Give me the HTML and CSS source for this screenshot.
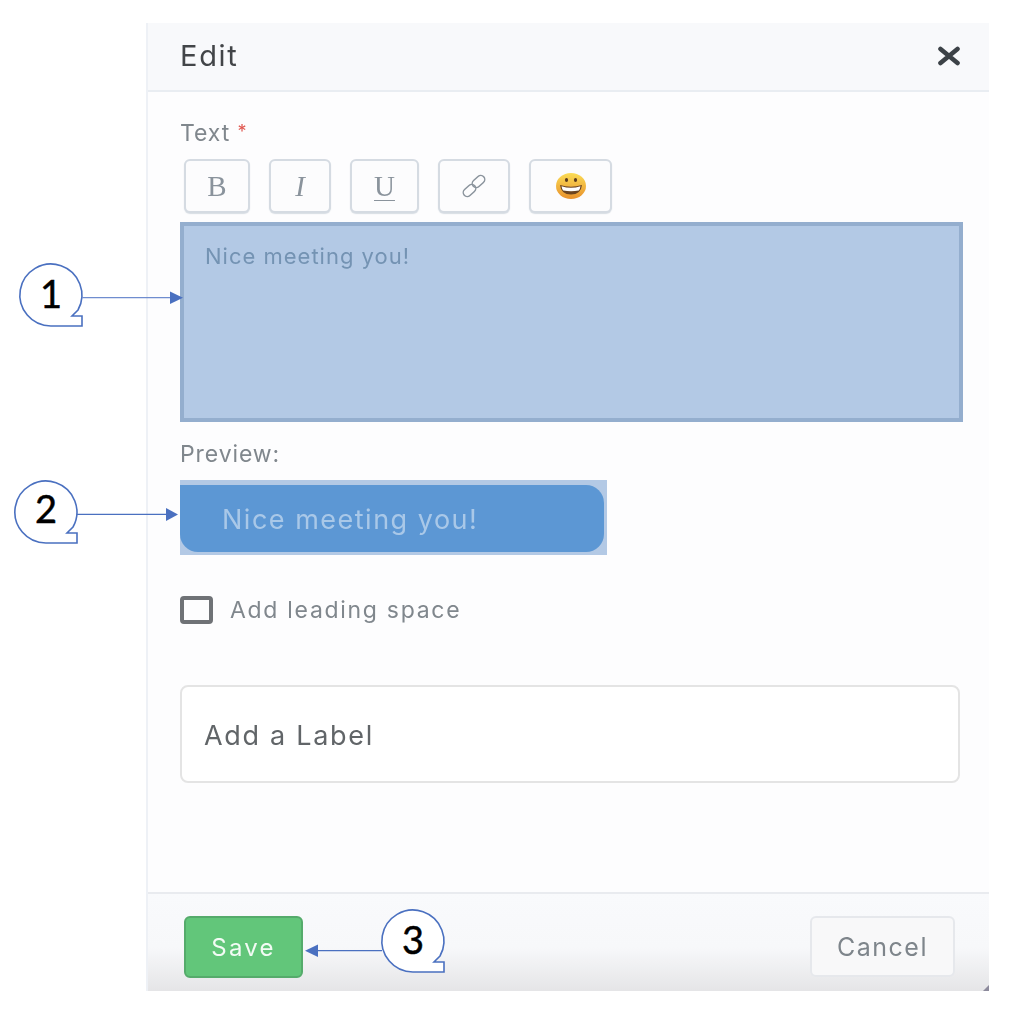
FILE: index.html
```html
<!DOCTYPE html>
<html lang="en">

<head>
    <meta charset="UTF-8">
    <meta name="viewport" content="width=device-width, initial-scale=1.0">
    <title>Edit</title>
    <link rel="stylesheet" href="styles.css">
</head>

<body>

    <div class="panel">
        <!-- Header -->
        <div class="panel-header">
            <h1>Edit</h1>
            <svg class="close-icon" width="24" height="20" viewBox="0 0 24 20">
                <path d="M3.5 3 L20.5 17 M20.5 3 L3.5 17" fill="none" stroke="#3c4247" stroke-width="4.6" stroke-linecap="round"/>
            </svg>
        </div>

        <!-- Main Content -->
        <div class="panel-body">
            <div class="field-label">Text <span class="required">*</span></div>

            <div class="toolbar">
                <button class="tool tool-b">B</button>
                <button class="tool tool-i">I</button>
                <button class="tool tool-u">U</button>
                <button class="tool tool-link">
                    <svg width="28" height="26" viewBox="0 0 28 26">
                        <g fill="none" stroke="#8a939c" stroke-width="1.5">
                            <rect x="2.5" y="13.5" width="14" height="8" rx="4" transform="rotate(-42 9.5 17.5)"/>
                            <rect x="11.5" y="4.5" width="14" height="8" rx="4" transform="rotate(-42 18.5 8.5)"/>
                        </g>
                    </svg>
                </button>
                <button class="tool tool-emoji">
                    <svg width="30" height="28" viewBox="0 0 30 28">
                        <defs>
                            <linearGradient id="face" x1="0" y1="0" x2="0" y2="1">
                                <stop offset="0" stop-color="#fbdc55"/>
                                <stop offset="1" stop-color="#e8912c"/>
                            </linearGradient>
                        </defs>
                        <ellipse cx="15" cy="14" rx="15" ry="13" fill="url(#face)"/>
                        <ellipse cx="10.5" cy="8" rx="1.6" ry="2.1" fill="#5a3a1c"/>
                        <ellipse cx="19.5" cy="8" rx="1.6" ry="2.1" fill="#5a3a1c"/>
                        <path d="M4 13 Q15 16.5 26 13 Q25 22.5 15 22.5 Q5 22.5 4 13 Z" fill="#6b4420"/>
                        <path d="M5.5 14.2 Q15 17.5 24.5 14.2 Q24 17 22.8 18.6 Q15 20 7.2 18.6 Q6 17 5.5 14.2 Z" fill="#fff"/>
                    </svg>
                </button>
            </div>

            <div class="text-box">Nice meeting you!</div>

            <div class="field-label preview-label">Preview:</div>
            <div class="preview-wrap">
                <div class="preview-bubble">Nice meeting you!</div>
            </div>

            <div class="check-row">
                <span class="check-box"></span>
                <span class="check-text">Add leading space</span>
            </div>

            <div class="label-input">Add a Label</div>
        </div>

        <!-- Footer -->
        <div class="panel-footer">
            <button class="btn-save">Save</button>
            <button class="btn-cancel">Cancel</button>
            <span class="resize-grip"></span>
        </div>
    </div>

    <!-- Callouts drawn over the screenshot -->
    <svg class="callouts" width="1024" height="1022" viewBox="0 0 1024 1022">
        <defs>
            <path id="bubble" d="M51 326 A31 31 0 1 1 78 310 L72 316 L82 316 L82 326 Z" fill="#fff" stroke="#4a70c0" stroke-width="1.6"/>
        </defs>

        <use href="#bubble"/>
        <text class="callout-num" x="51" y="308">1</text>
        <path d="M82 297.7 H171" stroke="#6f8dcf" stroke-width="1.3"/>
        <path d="M170 291.5 L183 297.7 L170 304 Z" fill="#4a70c0"/>

        <use href="#bubble" x="-5" y="217"/>
        <text class="callout-num" x="46" y="523">2</text>
        <path d="M77 514.4 H167" stroke="#4a70c0" stroke-width="1.3"/>
        <path d="M166 508 L178 514.4 L166 521 Z" fill="#4a70c0"/>

        <use href="#bubble" x="362" y="646"/>
        <text class="callout-num" x="413" y="954">3</text>
        <path d="M382 950.7 H317" stroke="#4a70c0" stroke-width="1.3"/>
        <path d="M318 944.5 L305 950.7 L318 957 Z" fill="#4a70c0"/>
    </svg>

</body>

</html>
```

FILE: styles.css
```css
body {
    font-family: Inter, "Liberation Sans", Arial, sans-serif;
    background-color: #fff;
    color: #333;
    margin: 0;
    padding: 23px 0 0 146px;
    height: 999px;
    overflow: hidden;
}

/* Panel */
.panel {
    width: 843px;
    height: 968px;
    box-sizing: border-box;
    border-left: 2px solid #eef1f6;
    display: flex;
    flex-direction: column;
    background-color: #fdfdfe;
    filter: blur(0.4px);
}

.panel-header {
    height: 69px;
    box-sizing: border-box;
    flex: none;
    display: flex;
    align-items: center;
    justify-content: space-between;
    padding: 0 28px 2px 32px;
    background-color: #f8f9fb;
    border-bottom: 2px solid #e9edf2;
}

.panel-header h1 {
    margin: 0;
    font-size: 29px;
    font-weight: normal;
    letter-spacing: 1.7px;
    color: #424548;
}

.close-icon {
    display: block;
}

/* Form */
.panel-body {
    flex: 1;
    padding: 0 0 0 32px;
}

.field-label {
    font-size: 23px;
    letter-spacing: 0.9px;
    line-height: 26px;
    color: #80878d;
    margin-top: 27px;
}

.required {
    color: #e0574f;
    font-size: 18px;
    vertical-align: 3px;
}

.toolbar {
    display: flex;
    gap: 19px;
    margin: 13px 0 9px 4px;
}

.tool {
    height: 54px;
    box-sizing: border-box;
    padding: 0;
    display: flex;
    align-items: center;
    justify-content: center;
    background-color: #fcfcfd;
    border: 2px solid #d5dbe2;
    border-radius: 6px;
    box-shadow: 0 1px 1px rgba(150, 165, 180, 0.35);
    color: #8a939c;
    font-family: "Liberation Serif", serif;
    font-size: 29px;
}

.tool-b { width: 66px; }
.tool-i { width: 62px; font-style: italic; }
.tool-u { width: 69px; text-decoration: underline; text-decoration-thickness: 1px; text-underline-offset: 4px; }
.tool-link { width: 72px; }
.tool-emoji { width: 83px; }

.text-box {
    width: 783px;
    height: 200px;
    box-sizing: border-box;
    padding: 17px 21px;
    background-color: #b3c9e5;
    border: 4px solid #94aece;
    font-size: 22px;
    letter-spacing: 1px;
    line-height: 26px;
    color: #7493b3;
}

.preview-label {
    margin-top: 19px;
}

.preview-wrap {
    width: 427px;
    height: 75px;
    box-sizing: border-box;
    margin-top: 13px;
    padding: 5px 3px 3px 0;
    background-color: #b3c9e5;
}

.preview-bubble {
    height: 100%;
    padding-left: 42px;
    border-radius: 0 18px 18px 18px;
    background-color: #5c97d4;
    color: #a9c8e8;
    font-size: 27px;
    letter-spacing: 1.5px;
    line-height: 70px;
}

.check-row {
    display: flex;
    align-items: center;
    gap: 17px;
    margin-top: 41px;
}

.check-box {
    width: 33px;
    height: 28px;
    box-sizing: border-box;
    border: 4px solid #6f7276;
    border-radius: 4px;
}

.check-text {
    font-size: 23px;
    letter-spacing: 1.7px;
    color: #80878d;
}

.label-input {
    width: 780px;
    height: 98px;
    box-sizing: border-box;
    margin-top: 61px;
    padding-left: 22px;
    border: 2px solid #e4e4e4;
    border-radius: 8px;
    background-color: #fff;
    color: #616568;
    font-size: 27px;
    letter-spacing: 1.7px;
    line-height: 98px;
}

/* Footer */
.panel-footer {
    position: relative;
    height: 99px;
    flex: none;
    box-sizing: border-box;
    display: flex;
    align-items: flex-start;
    justify-content: space-between;
    padding: 22px 34px 0 36px;
    border-top: 2px solid #e9ebef;
    background: linear-gradient(#f9fafc 0%, #f7f8fa 55%, #e5e5e7 100%);
}

.btn-save {
    width: 119px;
    height: 62px;
    padding: 0;
    background-color: #62c67a;
    border: 2px solid #55ab6b;
    border-radius: 6px;
    color: #f2fbf4;
    font-family: Inter, "Liberation Sans", Arial, sans-serif;
    font-size: 24px;
    letter-spacing: 2.2px;
}

.btn-cancel {
    width: 145px;
    height: 61px;
    padding: 0;
    background-color: #f8f8f9;
    border: 2px solid #e6e8ec;
    border-radius: 6px;
    color: #7e858b;
    font-family: Inter, "Liberation Sans", Arial, sans-serif;
    font-size: 25px;
    letter-spacing: 1.5px;
}

.resize-grip {
    position: absolute;
    right: 0;
    bottom: 0;
    width: 0;
    height: 0;
    border-left: 6px solid transparent;
    border-bottom: 6px solid #8c8a9c;
}

/* Callouts */
.callouts {
    position: absolute;
    top: 0;
    left: 0;
}

.callout-num {
    font-family: Lato, sans-serif;
    font-size: 38px;
    text-anchor: middle;
    fill: #000;
    stroke: #000;
    stroke-width: 0.5px;
}
```
